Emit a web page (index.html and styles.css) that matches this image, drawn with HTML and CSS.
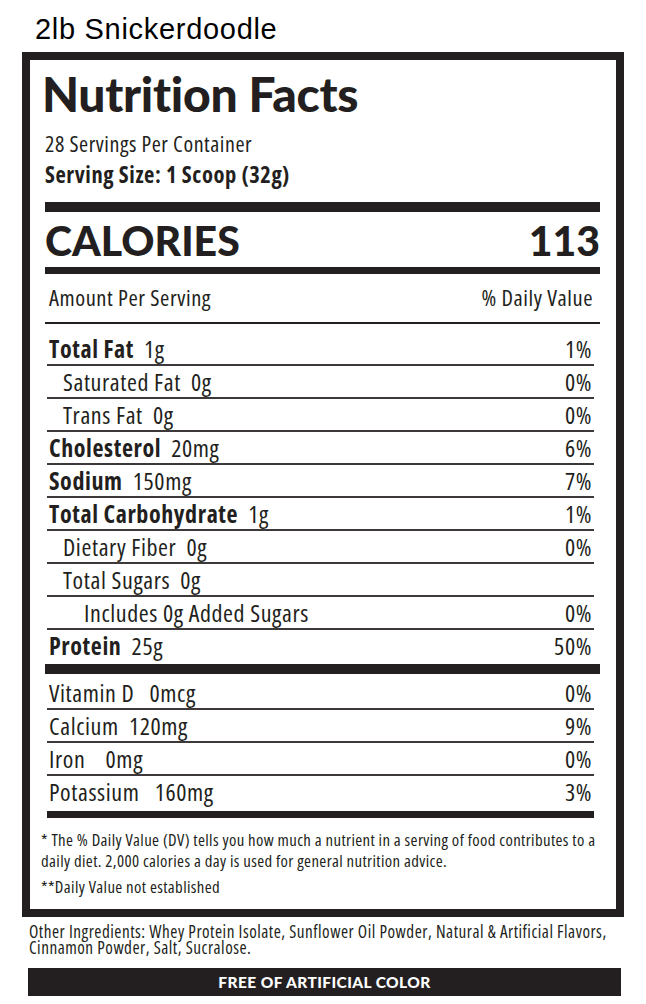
FILE: index.html
```html
<!DOCTYPE html>
<html lang="en">
<head>
<meta charset="utf-8">
<title>2lb Snickerdoodle – Nutrition Facts</title>
<link rel="stylesheet" href="styles.css">
</head>
<body>
<header class="product-title">2lb Snickerdoodle</header>
<section class="panel">
  <div class="facts">
    <h1 class="nf-title">Nutrition Facts</h1>
    <p class="servings">28 Servings Per Container</p>
    <p class="serving-size">Serving Size: 1 Scoop (32g)</p>
    <div class="rule rule-thick"></div>
    <div class="calories"><span>CALORIES</span><span>113</span></div>
    <div class="rule rule-med"></div>
    <div class="dv-head"><span>Amount Per Serving</span><span>% Daily Value</span></div>
    <div class="nutrients">
      <div class="row"><span><b>Total Fat</b>  1g</span><span>1%</span></div>
      <div class="row indent-1"><span>Saturated Fat  0g</span><span>0%</span></div>
      <div class="row indent-1"><span>Trans Fat  0g</span><span>0%</span></div>
      <div class="row"><span><b>Cholesterol</b>  20mg</span><span>6%</span></div>
      <div class="row"><span><b>Sodium</b>  150mg</span><span>7%</span></div>
      <div class="row"><span><b>Total Carbohydrate</b>  1g</span><span>1%</span></div>
      <div class="row indent-1"><span>Dietary Fiber  0g</span><span>0%</span></div>
      <div class="row indent-1"><span>Total Sugars  0g</span><span></span></div>
      <div class="row indent-2"><span>Includes 0g Added Sugars</span><span>0%</span></div>
      <div class="row"><span><b>Protein</b>  25g</span><span>50%</span></div>
    </div>
    <div class="rule rule-thick rule-mid"></div>
    <div class="nutrients vitamins">
      <div class="row"><span>Vitamin D   0mcg</span><span>0%</span></div>
      <div class="row"><span>Calcium  120mg</span><span>9%</span></div>
      <div class="row"><span>Iron    0mg</span><span>0%</span></div>
      <div class="row"><span>Potassium   160mg</span><span>3%</span></div>
    </div>
    <div class="rule rule-bottom"></div>
  </div>
  <div class="footnote">
    <p><span class="line">* The % Daily Value (DV) tells you how much a nutrient in a serving of food contributes to a</span><span class="line">daily diet. 2,000 calories a day is used for general nutrition advice.</span></p>
    <p>**Daily Value not established</p>
  </div>
</section>
<p class="ingredients"><span class="line">Other Ingredients: Whey Protein Isolate, Sunflower Oil Powder, Natural &amp; Artificial Flavors,</span><span class="line">Cinnamon Powder, Salt, Sucralose.</span></p>
<div class="free-banner">FREE OF ARTIFICIAL COLOR</div>
</body>
</html>
```

FILE: styles.css
```css
* {
  box-sizing: border-box;
  margin: 0;
  padding: 0;
}

html,
body {
  background: #ffffff;
}

body {
  width: 646px;
  height: 1004px;
  overflow: hidden;
  color: #231f20;
  font-family: "Open Sans", "Liberation Sans", sans-serif;
  font-stretch: 75%;
}

.product-title {
  font-family: "Liberation Sans", Arial, sans-serif;
  font-stretch: 100%;
  font-size: 29px;
  line-height: 32px;
  letter-spacing: 0.7px;
  color: #000000;
  padding: 13px 0 7px 35px;
}

.panel {
  margin-left: 22px;
  width: 602px;
  border: 8px solid #231f20;
}

.facts {
  padding: 0 16px 0 15px;
}

.nf-title {
  font-family: Lato, "Liberation Sans", sans-serif;
  font-stretch: 100%;
  font-weight: 900;
  font-size: 48px;
  line-height: 48px;
  margin: 10px 0 0 -3px;
  letter-spacing: -0.3px;
}

.servings {
  font-size: 22px;
  letter-spacing: 0.55px;
  line-height: 26px;
  margin-top: 12px;
}

.serving-size {
  font-size: 22.5px;
  letter-spacing: 0.6px;
  font-weight: 700;
  line-height: 26px;
  margin-top: 6px;
}

.rule {
  background: #231f20;
}

.rule-thick {
  height: 10px;
  margin-top: 14px;
}

.rule-mid {
  margin-top: 1px;
}

.rule-med {
  height: 7px;
  margin-top: 6px;
}

.rule-bottom {
  height: 7px;
  margin: 2px 6px 0 2px;
}

.calories {
  display: flex;
  justify-content: space-between;
  font-family: Lato, "Liberation Sans", sans-serif;
  font-stretch: 100%;
  font-weight: 900;
  font-size: 41px;
  line-height: 41px;
  margin-top: 8px;
}

.dv-head {
  display: flex;
  justify-content: space-between;
  font-size: 22.5px;
  letter-spacing: 0.55px;
  line-height: 26px;
  margin-top: 11px;
  padding: 0 7px 11px 4px;
  border-bottom: 2px solid #231f20;
}

.nutrients {
  margin: 0 6px 0 2px;
  padding-top: 9px;
}

.vitamins {
  padding-top: 3px;
}

.row {
  display: flex;
  justify-content: space-between;
  height: 33px;
  padding: 4px 2px 0;
  font-size: 24px;
  letter-spacing: 0.6px;
  line-height: 24px;
  white-space: pre;
  border-bottom: 2px solid #3d393a;
}

.row:last-child {
  border-bottom: 0;
}

.row b {
  font-weight: 700;
}

.indent-1 {
  padding-left: 16px;
}

.indent-2 {
  padding-left: 37px;
}

.footnote {
  padding: 11px 6px 12px 11px;
  font-size: 16.8px;
  letter-spacing: 0.37px;
  line-height: 21px;
}

.footnote p + p {
  margin-top: 5px;
}

.line {
  display: block;
  white-space: nowrap;
}

.ingredients {
  margin-top: 7px;
  padding-left: 29px;
  font-size: 17.2px;
  letter-spacing: 0.5px;
  line-height: 16px;
}

.free-banner {
  margin: 12px 0 0 28px;
  width: 593px;
  height: 28px;
  background: #231f20;
  color: #ffffff;
  font-family: Lato, "Liberation Sans", sans-serif;
  font-stretch: 100%;
  font-weight: 900;
  font-size: 15.5px;
  line-height: 28px;
  letter-spacing: 0.4px;
  text-align: center;
}
```
